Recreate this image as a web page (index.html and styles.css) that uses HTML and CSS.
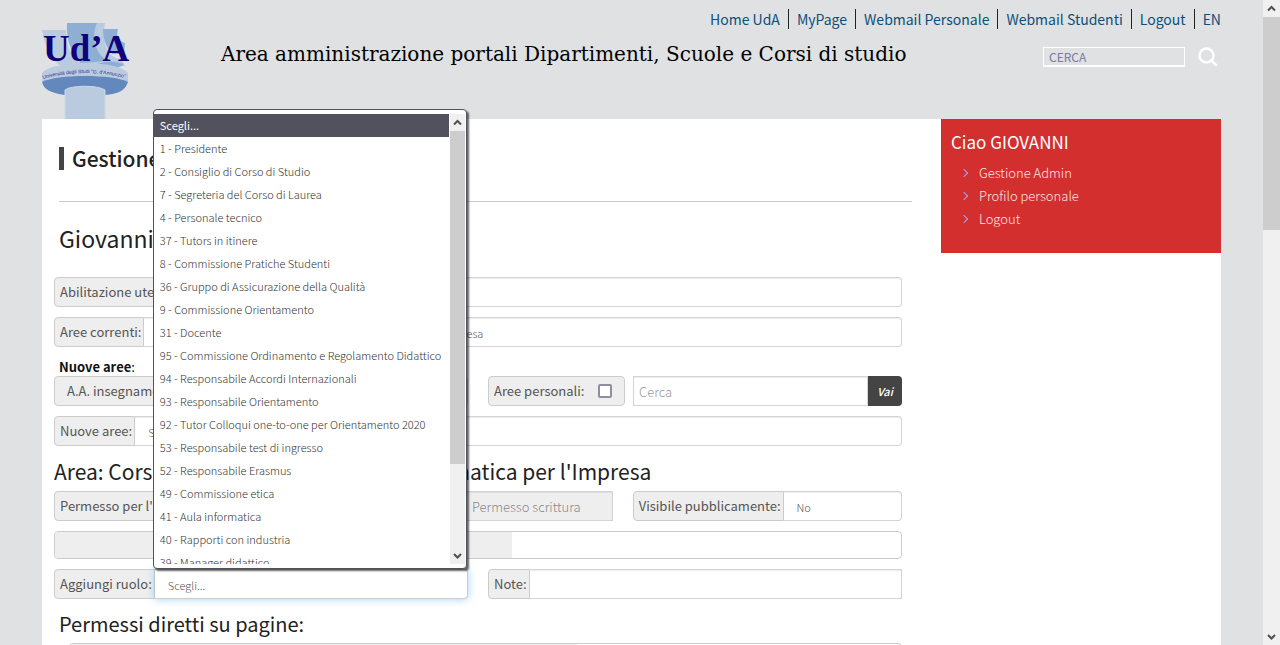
FILE: index.html
```html
<!DOCTYPE html>
<html lang="it">
<head>
<meta charset="utf-8">
<meta name="viewport" content="width=device-width, initial-scale=1">
<title>Area amministrazione portali</title>
<link rel="stylesheet" href="styles.css">
</head>
<body>
<div class="page">
  <header class="header">
    <svg class="logo" viewBox="0 0 88 100" role="img" aria-label="Ud'A">
      <path fill="#bacbdf" d="M0 11H24C24 27 29 40 42 46H17C7 37 2 24 0 11Z"/>
      <path fill="#bacbdf" d="M41 4H63C60 22 64 39 79 40L83 47H36Z"/>
      <path fill="#8eafd3" d="M25 4H55C49 17 53 35 66 42L39 44C28 34 24 18 25 4Z"/>
      <path fill="#8eafd3" d="M61 10H76C74 17 76 22 83 24L82 35H70C64 28 61 20 61 10ZM55 45Q69 40 82 45Q80 48 72 49Z"/>
      <path fill="#bacbdf" d="M0 54C10 41 76 41 86 54V62C80 76 6 76 0 62Z"/>
      <path fill="#6288bd" d="M0 63C14 55 72 55 86 63C83 72 76 75 63 76H23C9 74 2 71 0 63Z"/>
      <path fill="#bacbdf" stroke="#cbd8e7" d="M23 100V71C29 66 56 66 63 71V100"/>
      <text class="logo-letters" x="1" y="42">Ud’A</text>
      <path id="band" fill="none" d="M1 60Q43 48 87 60"/>
      <text class="logo-caption"><textPath href="#band">Università degli Studi "G. d'Annunzio"</textPath></text>
    </svg>
    <h1 class="site-title">Area amministrazione portali Dipartimenti, Scuole e Corsi di studio</h1>
    <div class="tools">
      <nav class="top-nav">
        <a href="#">Home UdA</a><a href="#">MyPage</a><a href="#">Webmail Personale</a><a href="#">Webmail Studenti</a><a href="#">Logout</a><a href="#">EN</a>
      </nav>
      <form class="search">
        <input type="text" placeholder="CERCA" aria-label="Cerca nel sito">
        <button type="button" aria-label="Cerca">
          <svg viewBox="0 0 20 20" width="20" height="20"><circle cx="8.500" cy="8.500" r="7"/><path d="M13.500 13.500L18 18"/></svg>
        </button>
      </form>
    </div>
  </header>

  <div class="content">
    <main class="main">
      <h2 class="page-title"><span>Gestione</span></h2>
      <h3 class="user-name">Giovanni</h3>

      <div class="group row">
        <label class="addon" for="abil">Abilitazione utente:</label>
        <input class="control" id="abil" type="text">
      </div>
      <div class="group row">
        <label class="addon" for="correnti">Aree correnti:</label>
        <select class="control" id="correnti"><option>Corso di Laurea triennale in: Economia e Informatica per l'Impresa</option></select>
      </div>
      <p class="section-label"><b>Nuove aree</b>:</p>
      <div class="row split">
        <div class="group span-6">
          <label class="addon inset" for="anno">A.A. insegnamento:</label>
          <select class="control" id="anno"><option>2020</option></select>
        </div>
        <div class="span-6 search-areas">
          <label class="addon boxed">Aree personali: <input type="checkbox" class="tick"></label>
          <div class="group grow">
            <input class="control square" type="text" placeholder="Cerca" aria-label="Cerca aree">
            <button type="button" class="go">Vai</button>
          </div>
        </div>
      </div>
      <div class="group row">
        <label class="addon" for="nuove">Nuove aree:</label>
        <select class="control" id="nuove"><option>Scegli...</option></select>
      </div>

      <h3 class="area-title">Area: Corso di Studio in Economia e Informatica per l'Impresa</h3>
      <div class="row split">
        <div class="group span-8">
          <label class="addon" for="permesso">Permesso per l'area:</label>
          <input class="control square disabled" id="permesso" type="text" value="Permesso scrittura" disabled>
        </div>
        <div class="group span-4">
          <label class="addon" for="visibile">Visibile pubblicamente:</label>
          <select class="control" id="visibile"><option>No</option></select>
        </div>
      </div>
      <div class="strip row"><div class="strip-head"></div></div>
      <div class="row split">
        <div class="group span-6">
          <label class="addon" for="ruolo">Aggiungi ruolo:</label>
          <div class="open-field">
            <select class="control focused" id="ruolo"><option>Scegli...</option></select>
            <div class="popup">
              <ul class="options" role="listbox" aria-label="Ruoli">
                <li role="option" aria-selected="true" class="selected">Scegli...</li>
                <li role="option">1 - Presidente</li>
                <li role="option">2 - Consiglio di Corso di Studio</li>
                <li role="option">7 - Segreteria del Corso di Laurea</li>
                <li role="option">4 - Personale tecnico</li>
                <li role="option">37 - Tutors in itinere</li>
                <li role="option">8 - Commissione Pratiche Studenti</li>
                <li role="option">36 - Gruppo di Assicurazione della Qualità</li>
                <li role="option">9 - Commissione Orientamento</li>
                <li role="option">31 - Docente</li>
                <li role="option">95 - Commissione Ordinamento e Regolamento Didattico</li>
                <li role="option">94 - Responsabile Accordi Internazionali</li>
                <li role="option">93 - Responsabile Orientamento</li>
                <li role="option">92 - Tutor Colloqui one-to-one per Orientamento 2020</li>
                <li role="option">53 - Responsabile test di ingresso</li>
                <li role="option">52 - Responsabile Erasmus</li>
                <li role="option">49 - Commissione etica</li>
                <li role="option">41 - Aula informatica</li>
                <li role="option">40 - Rapporti con industria</li>
                <li role="option">39 - Manager didattico</li>
              </ul>
              <div class="bar popup-bar" aria-hidden="true">
                <svg viewBox="0 0 17 17"><path d="M5 10.500L8.500 7L12 10.500"/></svg>
                <div class="thumb"></div>
                <svg viewBox="0 0 17 17"><path d="M5 7L8.500 10.500L12 7"/></svg>
              </div>
            </div>
          </div>
        </div>
        <div class="group span-6">
          <label class="addon" for="note">Note:</label>
          <input class="control square" id="note" type="text">
        </div>
      </div>
      <h3 class="pages-title">Permessi diretti su pagine:</h3>
      <div class="strip pages"><div class="strip-head wide"></div></div>
    </main>

    <aside class="user-box">
      <h2>Ciao GIOVANNI</h2>
      <ul>
        <li><a href="#">Gestione Admin</a></li>
        <li><a href="#">Profilo personale</a></li>
        <li><a href="#">Logout</a></li>
      </ul>
    </aside>
  </div>
</div>
<div class="bar page-bar" aria-hidden="true">
  <svg viewBox="0 0 17 17"><path d="M5 10.500L8.500 7L12 10.500"/></svg>
  <div class="thumb"></div>
  <svg viewBox="0 0 17 17"><path d="M5 7L8.500 10.500L12 7"/></svg>
</div>
</body>
</html>
```

FILE: styles.css
```css
* { box-sizing: border-box; }

body {
  margin: 0;
  height: 100vh;
  display: flex;
  overflow: hidden;
  background: #dfe1e2;
  color: #222;
  font: 14px/20px "Noto Sans CJK SC", "Noto Sans", sans-serif;
}

h1, h2, h3, p, ul { margin: 0; padding: 0; }
ul { list-style: none; }
a { text-decoration: none; }
input, select, button { font: inherit; }

.page { flex: 1; min-width: 0; padding: 0 42px; }

/* Header */
.header { display: flex; height: 119px; position: relative; }
.logo { width: 88px; height: 100px; margin-top: 19px; flex: none; overflow: visible; }
.logo-letters { fill: #10007b; font: 700 37px "Liberation Serif", serif; }
.logo-caption { fill: #332c91; font: 400 5px "Liberation Sans", sans-serif; }
.site-title {
  margin: 40px 0 0 91px;
  color: #000;
  font: 400 20px/28px "DejaVu Serif", serif;
  white-space: nowrap;
}
.tools { position: absolute; top: 9px; right: 0; }
.top-nav { display: flex; justify-content: flex-end; }
.top-nav a { color: #0c4f7c; padding: 0 8px; border-left: 1px solid #222; white-space: nowrap; }
.top-nav a:first-child { border-left: 0; }
.top-nav a:last-child { padding-right: 0; }
.search { display: flex; justify-content: flex-end; align-items: center; gap: 13px; margin-top: 18px; }
.search input {
  width: 142px; height: 20px; padding: 0 5px;
  border: 1px solid #fff; border-bottom-width: 2px; background: transparent;
  font-size: 12px;
}
.search input::placeholder { color: #7c78a0; }
.search button { border: 0; padding: 0; margin-right: 3px; background: none; display: flex; }
.search svg { fill: none; stroke: #fff; stroke-width: 2.500; stroke-linecap: round; }

/* Content */
.content { display: flex; align-items: flex-start; background: #fff; min-height: 526px; }
.main { flex: 1; min-width: 0; padding: 0 39px 0 12px; }
.page-title {
  margin: 0 -10px 0 5px; height: 83px; padding-top: 28px;
  border-bottom: 1px solid #ccc;
  font-size: 21px; line-height: 23px; font-weight: 500;
}
.page-title span { display: block; border-left: 5px solid #444; padding-left: 8px; }
.user-name { margin: 20px 5px 23px; font-size: 23px; line-height: 32px; font-weight: 400; }

.row { margin-bottom: 10px; }
.group { display: flex; min-width: 0; height: 30px; }
.split { display: grid; grid-template-columns: repeat(12, 1fr); column-gap: 20px; }
.span-4 { grid-column: span 4; }
.span-6 { grid-column: span 6; }
.span-8 { grid-column: span 8; }

.addon {
  flex: none; height: 30px; padding: 0 2px 0 5px;
  border: 1px solid #ccc; border-radius: 4px 0 0 4px;
  background: #eee; color: #555; font-size: 13px; line-height: 28px; white-space: nowrap;
}
.inset { padding-left: 12px; }
.boxed { display: flex; align-items: center; justify-content: space-between; width: 137px; border-radius: 4px; padding-right: 12px; }
.control {
  flex: 1; min-width: 0; height: 30px; padding: 0 5px;
  border: 1px solid #d4d4d4; border-left: 0; border-radius: 0 4px 4px 0;
  background: #fff; color: #555; font-size: 13px;
  box-shadow: inset 0 1px 1px rgba(0, 0, 0, .075);
}
select.control { appearance: none; padding: 2px 13px 0; font-size: 11px; font-weight: 300; color: #555; }
.control::placeholder { color: #999; font-weight: 300; opacity: 1; }
.square { border-radius: 0; }
.disabled { background: #eee; color: #888; font-weight: 300; text-align: right; padding-right: 31px; }
.tick {
  appearance: none; width: 14px; height: 14px; margin: 0;
  border: 2px solid #8f8f9d; border-radius: 2px; background: #fff;
}
.search-areas { display: flex; gap: 8px; }
.grow { flex: 1; }
.grow .control { border-left: 1px solid #d4d4d4; }
.go {
  width: 34px; border: 0; border-radius: 0 4px 4px 0; padding: 0;
  background: #444; color: #fff; font-size: 11px; font-style: italic; font-weight: 500;
}
.section-label { margin: 0 5px; height: 19px; font-size: 13px; color: #111; }
.area-title { margin: 10px 0 5px; font-size: 21px; line-height: 30px; font-weight: 400; white-space: nowrap; }
.pages-title { margin: 10px 5px 4px; font-size: 20px; line-height: 30px; font-weight: 400; }
.strip { height: 28px; border: 1px solid #ccc; border-radius: 4px; overflow: hidden; }
.strip-head { width: 54%; height: 100%; background: #eee; }
.strip.pages { margin-left: 15px; }
.strip-head.wide { width: 61%; }

/* Open drop-down */
.open-field { position: relative; flex: 1; min-width: 0; display: flex; }
.focused { border-color: #ccc; box-shadow: 0 0 8px rgba(102, 175, 233, .6); }
.popup {
  position: absolute; z-index: 2; bottom: 30px; left: -2px; right: 1px;
  display: flex; padding: 4px 1px 4px 0;
  border: 1px solid #52525e; border-radius: 4px;
  background: #fff; box-shadow: 2px 2px 2px rgba(0, 0, 0, .6);
}
.options { flex: 1; min-width: 0; height: 450px; margin-right: 1px; overflow: hidden; }
.options li {
  padding-left: 6px; color: #333; font-size: 11px; font-weight: 300; line-height: 23px; white-space: nowrap;
}
.options .selected { background: #52525e; color: #fff; font-weight: 400; }

/* Scroll bars */
.bar { display: flex; flex-direction: column; justify-content: space-between; background: #f0f0f0; }
.bar svg { width: 17px; height: 17px; flex: none; align-self: center; fill: none; stroke: #505050; stroke-width: 2; }
.thumb { background: #cdcdcd; margin-bottom: auto; }
.popup-bar { width: 15px; height: 450px; }
.popup-bar .thumb { height: 74%; }
.page-bar { width: 17px; flex: none; }
.page-bar .thumb { height: 33%; }

/* User box */
.user-box { width: 280px; min-height: 134px; flex: none; padding: 11px 10px 20px; background: #d32f2f; color: #fff; }
.user-box h2 { font-size: 17px; line-height: 24px; font-weight: 400; margin-bottom: 7px; }
.user-box a {
  display: flex; align-items: center; gap: 12px; padding-left: 10px;
  color: #ffe2e2; line-height: 23px; font-size: 13px; font-weight: 300;
}
.user-box a::before {
  content: ""; width: 5px; height: 5px;
  border-top: 1px solid #9fa8ee; border-right: 1px solid #9fa8ee;
  transform: rotate(45deg);
}
```
